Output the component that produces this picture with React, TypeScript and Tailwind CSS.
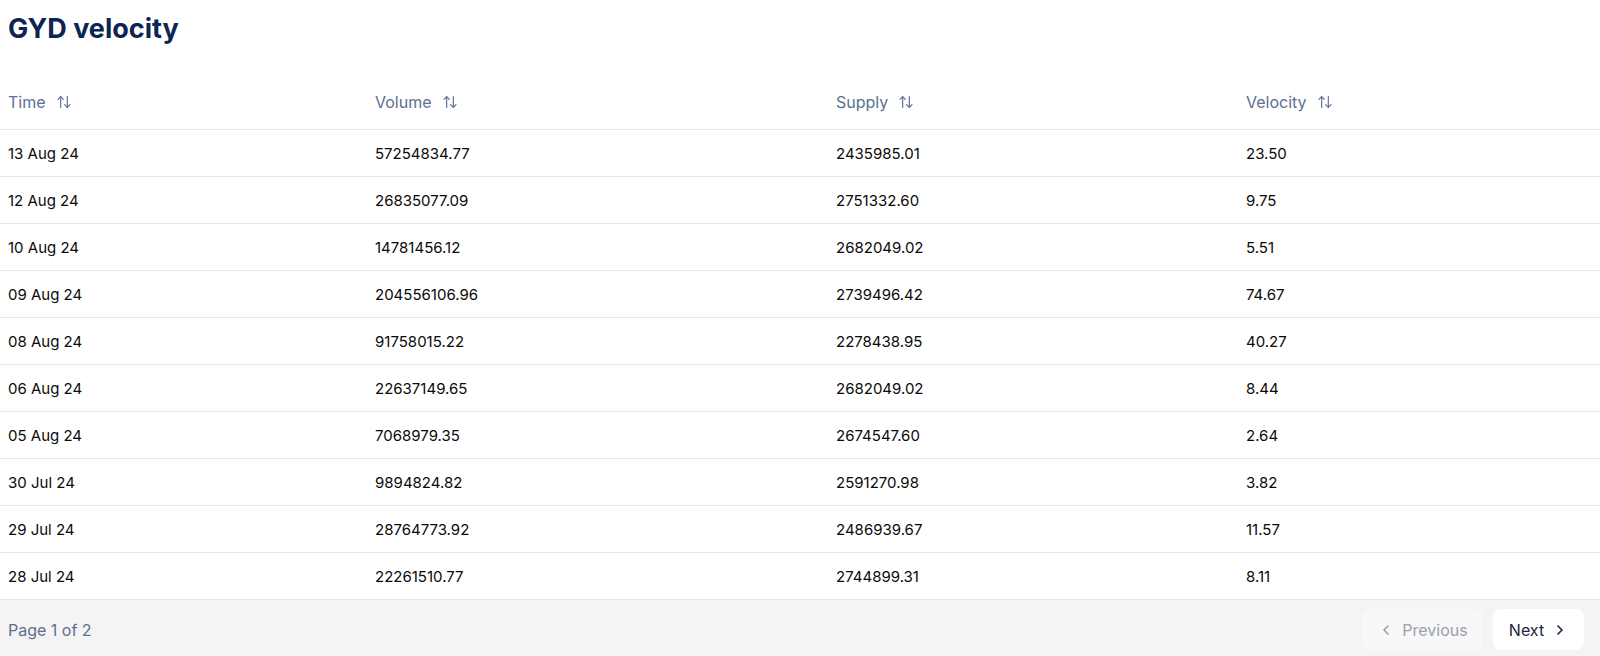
import { ArrowUpDown, ChevronLeft, ChevronRight } from "lucide-react";

const rows = [
	["13 Aug 24", "57254834.77", "2435985.01", "23.50"],
	["12 Aug 24", "26835077.09", "2751332.60", "9.75"],
	["10 Aug 24", "14781456.12", "2682049.02", "5.51"],
	["09 Aug 24", "204556106.96", "2739496.42", "74.67"],
	["08 Aug 24", "91758015.22", "2278438.95", "40.27"],
	["06 Aug 24", "22637149.65", "2682049.02", "8.44"],
	["05 Aug 24", "7068979.35", "2674547.60", "2.64"],
	["30 Jul 24", "9894824.82", "2591270.98", "3.82"],
	["29 Jul 24", "28764773.92", "2486939.67", "11.57"],
	["28 Jul 24", "22261510.77", "2744899.31", "8.11"],
];

const columns = ["Time", "Volume", "Supply", "Velocity"];

export default function App() {
	return (
		<div className="w-[1600px] h-[656px] overflow-hidden bg-white font-['Inter',sans-serif] flex flex-col">
			<h2 className="px-2 pt-[13px] h-[82px] shrink-0 text-[27px] leading-8 font-bold text-[#0c2552]">
				GYD velocity
			</h2>

			<div className="grid grid-cols-[367px_461px_410px_1fr] h-[48px] shrink-0 pb-[7px] items-center border-b border-[#e8e8e8]">
				{columns.map((col) => (
					<div
						key={col}
						className="px-2 flex items-center gap-[10px] text-[16px] text-[#5b7092]"
					>
						<span>{col}</span>
						<ArrowUpDown className="w-4 h-4" strokeWidth={1.75} />
					</div>
				))}
			</div>

			{rows.map((row) => (
				<div
					key={row[0]}
					className="grid grid-cols-[367px_461px_410px_1fr] h-[47px] shrink-0 pt-[3px] items-center border-b border-[#e8e8e8] last:border-b-0 text-[15px] text-[#0a0a0a]"
				>
					{row.map((cell, i) => (
						<div key={i} className="px-2">
							{cell}
						</div>
					))}
				</div>
			))}

			<div className="flex-1 bg-[#f4f4f4] flex items-center justify-between pl-2 pr-4">
				<span className="pt-[4px] text-[16px] text-[#5b7092]">Page 1 of 2</span>
				<div className="flex items-center gap-[10px] pt-[3px]">
					<button className="h-[41px] w-[120px] rounded-lg bg-[#f8f8f8] flex items-center justify-center gap-2 text-[16px] text-[#9aa1ac]">
						<ChevronLeft className="w-4 h-4" strokeWidth={2.5} />
						Previous
					</button>
					<button className="h-[41px] w-[91px] rounded-lg bg-white flex items-center justify-center gap-2 text-[16px] text-[#1a2640]">
						Next
						<ChevronRight className="w-4 h-4" strokeWidth={2.5} />
					</button>
				</div>
			</div>
		</div>
	);
}
